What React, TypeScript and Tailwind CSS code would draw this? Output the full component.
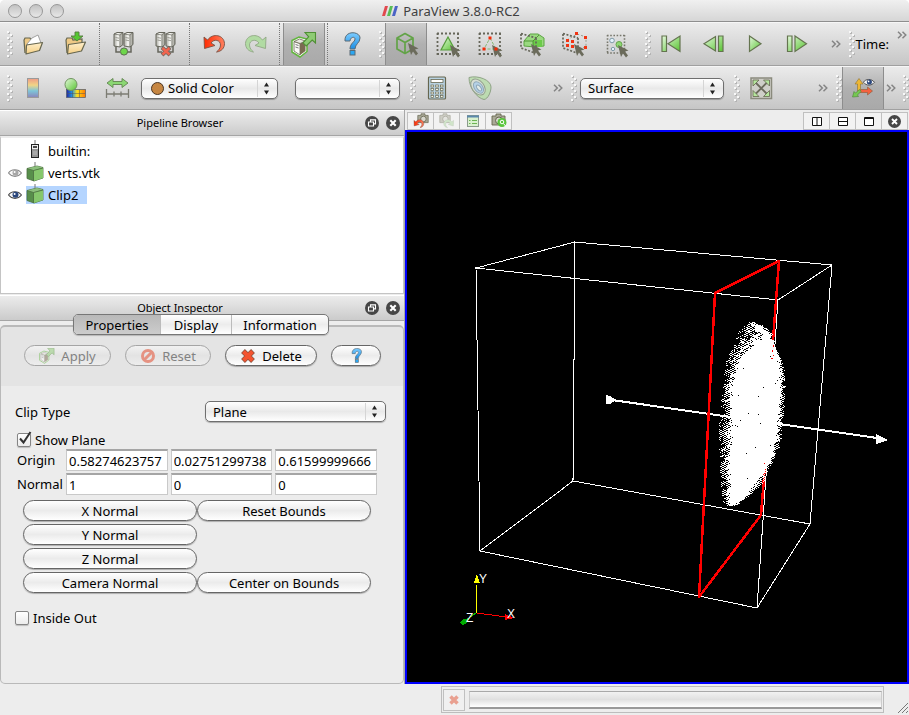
import React from "react";

/* ---------- shared pieces ---------- */

function Grip() {
  const dots = [0, 1, 2, 3, 4, 5, 6, 7, 8];
  return (
    <svg className="h-7 w-[6px] shrink-0" viewBox="0 0 6 28" aria-hidden="true">
      {dots.map((i) => (
        <g key={i}>
          <rect x={i % 2 ? 4 : 1} y={i * 3 + 2} width="2" height="2" fill="#b4b4b4" />
          <rect x={i % 2 ? 3 : 0} y={i * 3 + 1} width="2" height="2" fill="#f8f8f8" />
        </g>
      ))}
    </svg>
  );
}

function Separator() {
  return (
    <div className="flex w-[6px] shrink-0 self-stretch pl-[2px]">
      <div className="border-l border-dotted border-[#777]" />
    </div>
  );
}

function More() {
  return (
    <svg className="h-[8px] w-[10px] shrink-0" viewBox="0 0 10 8" fill="none" stroke="#858585" strokeWidth="1.5">
      <path d="M1 .7 4.3 4 1 7.3M5.5.7 8.8 4 5.5 7.3" />
    </svg>
  );
}

function ToolButton({ label, pressed, children }: { label: string; pressed?: boolean; children: React.ReactNode }) {
  const look = pressed
    ? "border-x border-[#8d8d8d] bg-linear-to-b from-[#cfcfcf] via-[#b0b0b0] to-[#a9a9a9]"
    : "";
  return (
    <button aria-label={label} className={"flex w-[42px] shrink-0 items-center justify-center self-stretch " + look}>
      <svg className="size-6 overflow-visible" viewBox="0 0 24 24" fill="none">
        {children}
      </svg>
    </button>
  );
}

function Select({ label, id, className, dot, value }: { label: string; id: string; className: string; dot?: boolean; value: string }) {
  return (
    <div className={"relative h-[21px] shrink-0 " + className}>
      <select
        id={id}
        aria-label={label}
        className={
          "block h-full w-full appearance-none rounded-[5px] border border-[#6f6f6f] bg-linear-to-b from-white via-[#e9e9e9] to-white text-[13px] leading-[18px] text-black shadow-[0_1px_1px_#0004] " +
          (dot ? "pl-[26px]" : "pl-[7px]")
        }
      >
        <option>{value}</option>
      </select>
      {dot && <span className="pointer-events-none absolute top-1 left-[10px] size-[13px] rounded-full border border-[#4a3523] bg-[#c68642]" />}
      <svg className="pointer-events-none absolute top-px right-px h-[19px] w-[20px]" viewBox="0 0 20 19">
        <path d="M.5 1v17" stroke="#d5d5d5" />
        <path d="M7 7.5 9.5 3.5 12 7.5zM7 11.5 9.5 15.5 12 11.5z" fill="#222" />
      </svg>
    </div>
  );
}

function Pill({ children, disabled, className = "", label }: { children?: React.ReactNode; disabled?: boolean; className?: string; label?: string }) {
  return (
    <button
      aria-label={label}
      disabled={disabled}
      className={
        "flex h-[21px] items-center justify-center rounded-full border text-[13px] leading-[18px] " +
        (disabled
          ? "border-[#a5a5a5] bg-linear-to-b from-[#f1f1f1] via-[#e3e3e3] to-[#ededed] text-[#828282] "
          : "border-[#666] bg-linear-to-b from-white via-[#ebebeb] to-white text-black shadow-[0_1px_1px_#0004] ") +
        className
      }
    >
      {children}
    </button>
  );
}

function RoundGlyph({ kind }: { kind: "float" | "close" }) {
  return (
    <svg className="size-[14px]" viewBox="0 0 14 14" fill="none">
      <circle cx="7" cy="7" r="7" fill="#464646" />
      {kind === "close" ? (
        <path d="M4.3 4.3 9.7 9.7M9.7 4.3 4.3 9.7" stroke="#fff" strokeWidth="2.1" />
      ) : (
        <path d="M5.5 6V3.9h5v4H8.7M3.5 6h5v4h-5z" stroke="#fff" strokeWidth="1.1" />
      )}
    </svg>
  );
}

function DockHeader({ title }: { title: string }) {
  return (
    <div className="flex h-[26px] shrink-0 items-center border-t border-b border-t-white border-b-[#a5a5a5] bg-linear-to-b from-[#ececec] to-[#cbcbcb] pr-1">
      <h2 className="flex-1 pr-[5px] text-center text-[11px] leading-4">{title}</h2>
      <div className="flex gap-[7px]">
        <button aria-label={"Float " + title}><RoundGlyph kind="float" /></button>
        <button aria-label={"Close " + title}><RoundGlyph kind="close" /></button>
      </div>
    </div>
  );
}

function Checkbox({ id, label, checked }: { id: string; label: string; checked?: boolean }) {
  return (
    <div className="flex h-[18px] items-center gap-1">
      <span className="relative flex">
        <input
          id={id}
          type="checkbox"
          defaultChecked={checked}
          className="size-[14px] appearance-none rounded-[2px] border border-[#858585] bg-linear-to-b from-white to-[#ececec] shadow-[0_1px_1px_#0003]"
        />
        {checked && (
          <svg className="pointer-events-none absolute -top-[2px] left-0 h-4 w-4" viewBox="0 0 16 16" fill="none">
            <path d="M3 7.5l3.500 4L13.5 1" stroke="#333" strokeWidth="2" />
          </svg>
        )}
      </span>
      <label htmlFor={id} className="text-[13px] leading-[18px]">{label}</label>
    </div>
  );
}

/* ---------- icon drawings (24 x 24) ---------- */

const ink = "#66664f";

function Gradients() {
  return (
    <svg className="absolute size-0" aria-hidden="true">
      <defs>
        <linearGradient id="green" x1="0" y1="0" x2="1" y2="1">
          <stop offset="0" stopColor="#e4f8dc" />
          <stop offset="1" stopColor="#58c431" />
        </linearGradient>
        <linearGradient id="folder" x1="0" y1="0" x2="0" y2="1">
          <stop offset="0" stopColor="#fff0cd" />
          <stop offset="1" stopColor="#f5cf84" />
        </linearGradient>
        <linearGradient id="steel" x1="0" y1="0" x2="1" y2="0">
          <stop offset="0" stopColor="#a5a59d" />
          <stop offset=".45" stopColor="#fbfbf8" />
          <stop offset="1" stopColor="#96968c" />
        </linearGradient>
        <linearGradient id="blue" x1="0" y1="0" x2="0" y2="1">
          <stop offset="0" stopColor="#7cccff" />
          <stop offset="1" stopColor="#1c8fe5" />
        </linearGradient>
        <linearGradient id="red" x1="0" y1="0" x2="1" y2="0">
          <stop offset="0" stopColor="#ff2a00" />
          <stop offset="1" stopColor="#ff8060" />
        </linearGradient>
        <linearGradient id="spectrum" x1="0" y1="0" x2="0" y2="1">
          <stop offset="0" stopColor="#ef9a86" />
          <stop offset=".35" stopColor="#f1d586" />
          <stop offset=".65" stopColor="#7ec5d8" />
          <stop offset="1" stopColor="#8b85bb" />
        </linearGradient>
        <linearGradient id="rainbow" x1="0" y1="0" x2="1" y2="0">
          <stop offset="0" stopColor="#24249c" />
          <stop offset=".3" stopColor="#2196e8" />
          <stop offset=".55" stopColor="#ffe11a" />
          <stop offset="1" stopColor="#ff7a00" />
        </linearGradient>
      </defs>
    </svg>
  );
}

const Folder = () => (
  <>
    <path d="M3 21 2 8l1-2h5l1 2 9-1v4" fill="#eec985" stroke={ink} strokeWidth="1.2" />
    <path d="M4.5 12.5 21.5 10 17.5 19 3.5 22z" fill="url(#folder)" stroke={ink} strokeWidth="1.2" strokeLinejoin="round" />
  </>
);

const OpenIcon = () => (
  <>
    <path d="M3 21 2 8l1-2h5l1 2" fill="#eec985" stroke={ink} strokeWidth="1.2" />
    <path d="M5 12 10 6 16 3 19 11 6 15z" fill="#fff" stroke="#999" strokeWidth=".9" />
    <path d="M4.5 13 20.5 10.5 17.5 18.5 4 22z" fill="url(#folder)" stroke={ink} strokeWidth="1.2" strokeLinejoin="round" />
  </>
);

const LoadStateIcon = () => (
  <>
    <Folder />
    <path d="M11 0h4v4h4l-6 5-6-5h4z" fill="#56c832" stroke="#55793f" strokeWidth=".9" />
  </>
);

const Servers = () => (
  <>
    <path d="M4 14v6h4M19 14v6h-4" stroke="#66665c" strokeWidth="1.5" />
    {[2, 12].map((x) => (
      <g key={x}>
        <path d={`M${x} 2 ${x + 3} .5h6v12l-3 2.500-6-1z`} fill="url(#steel)" stroke="#66665c" strokeWidth="1" />
        <path d={`M${x} 2l6 1v12M${x + 6} 3l3-2.500`} stroke="#66665c" strokeWidth=".7" />
        <path d={`M${x + 1.500} 5.500l3.500.7M${x + 1.500} 8l3.500.7`} stroke="#8a8a80" strokeWidth=".8" />
      </g>
    ))}
  </>
);

const ConnectIcon = () => (
  <>
    <Servers />
    <circle cx="12" cy="19.500" r="3.600" fill="#6dd64b" stroke="#5c6b50" />
  </>
);

const DisconnectIcon = () => (
  <>
    <Servers />
    <path d="M8 15.500l8 7.500M16 15.500 8 23" stroke="#76655c" strokeWidth="4" />
    <path d="M8.500 16l7 6.500M15.500 16l-7 6.500" stroke="#f2654f" strokeWidth="2.400" />
  </>
);

const UndoIcon = () => (
  <path d="M2 5 2.500 16.500 13 13.500 9 11C12 6.500 18.500 8 18.500 13c0 3-2 5.500-4 7C19.500 19.500 22.500 16 22.500 11.500 22 3 11 .5 5.500 8z" fill="url(#red)" stroke="#7c5143" strokeWidth=".9" />
);

const RedoIcon = () => (
  <path d="M22 5 21.500 16.500 11 13.500 15 11C12 6.500 5.500 8 5.500 13c0 3 2 5.500 4 7C4.500 19.500 1.500 16 1.500 11.500 2 3 13 .5 18.500 8z" fill="#b1dba3" stroke="#91a785" strokeWidth=".9" />
);

const ServerArrow = () => (
  <>
    <path d="M0 8.500 7 5l8 2v12.500L8 25l-8-5z" fill="#fff" stroke="#62b53e" strokeWidth="1.500" />
    <path d="M2 9.500 8 11.500V23l-6-4z" fill="#fbfbf8" stroke={ink} strokeWidth=".8" />
    <path d="M8 11.500 13.500 9v10L8 23z" fill="#7b6b52" />
    <path d="M2 9.500 7.500 7l6 2L8 11.500z" fill="#e9e9e2" stroke={ink} strokeWidth=".8" />
    <path d="M3.500 12.500l3 1M3.500 15l3 1" stroke="#777" strokeWidth="1" />
    <path d="M13 .5h10.500V11l-3.300-3-6 6-3.200-3.200 5.700-6z" fill="#8ecb74" stroke="#4f8f35" strokeWidth="1.100" />
  </>
);

const HelpIcon = () => (
  <>
    <path d="M5 9C4-2 20-1 20 6c0 5-5 6-5 11h-5c0-6 5-7 5-10 0-2.500-4.500-2.500-5 2z" fill="url(#blue)" stroke="#5a6b76" strokeWidth="1" />
    <rect x="10" y="18.500" width="5" height="4.500" fill="#2ba7f2" stroke="#5a6b76" strokeWidth="1" />
  </>
);

const Cursor = ({ x = 13, y = 11 }: { x?: number; y?: number }) => (
  <path transform={`translate(${x} ${y})`} d="M0 0 10.500 5.500 7 6.500 10 10.500 8 12.500 5 8.500 3 12z" fill="#6b6b5b" />
);

const CubeSelect = () => (
  <>
    <path d="M3 6 11 1.500 19 6v11l-8 4.500L3 17zM3 6l8 4.500L19 6M11 10.500v11" stroke="#62a347" strokeWidth="1.700" strokeLinejoin="round" />
    <Cursor x={14} y={11} />
  </>
);

const DashBox = () => <path d="M1 1.500h22M1 22h22M1.500 1v22M22 1v22" stroke="#66665a" strokeWidth="1.800" strokeDasharray="2 2" />;

const SurfaceCells = () => (
  <>
    <DashBox />
    <path d="M12 5 19 18H5z" fill="url(#green)" stroke="#569b3c" strokeWidth="1.200" />
    <Cursor x={14} y={13} />
  </>
);

const SurfacePoints = () => (
  <>
    <DashBox />
    <path d="M12 6 18 17H6z" stroke="#86b873" strokeDasharray="3 1.500" />
    <Cursor x={14} y={13} />
    <path d="M10.500 4.500h3v3h-3zM4.500 15.500h3v3h-3zM16.500 15.500h3v3h-3z" fill="#f32a08" />
  </>
);

const FrustumBase = () => (
  <path d="M1 1.500 16 6M1 2v14l14 5M16 6v12" stroke="#66665a" strokeWidth="1.700" strokeDasharray="2 1.600" />
);

const FrustumCells = () => (
  <>
    <path d="M4 9 10 2h8l6 4v8l-9 1-11-1z" fill="#9ad980" stroke="#5da543" />
    <path d="M13 8h9v7h-9z" fill="#6ccb4a" />
    <path d="M4 9h9v6M13 9l6-6" stroke="#4b9030" strokeWidth=".9" />
    <FrustumBase />
    <Cursor x={11} y={12} />
  </>
);

const FrustumPoints = () => (
  <>
    <FrustumBase />
    <path d="M5 8 15 2l9 3v10l-9 2" stroke="#999c8d" strokeDasharray="2 2" />
    <path d="M4 7h3v3H4zM4 12h3v3H4zM9 8h3v3H9zM9 13h3v3H9zM13 0h3v3h-3zM22 4h3v3h-3zM22 14h3v3h-3z" fill="#f13412" />
    <Cursor x={12} y={12} />
  </>
);

const BlockSelect = () => (
  <>
    <path d="M3 3.500h18M3 21h18M3.500 3v18M20.500 3v18" stroke="#77776c" strokeWidth="1.600" strokeDasharray="1.600 1.600" />
    <circle cx="8" cy="8.500" r="2.300" fill="#e3f2fa" stroke="#7f9aa8" />
    <circle cx="9" cy="17" r="1.700" fill="#e3f2fa" stroke="#7f9aa8" />
    <circle cx="15" cy="12.500" r="3" fill="#8ed873" stroke="#65a34d" />
    <Cursor x={14} y={13} />
  </>
);

const playInk = { fill: "url(#green)", stroke: "#64744f", strokeWidth: 1.2 };
const FirstIcon = () => <path d="M2 4h4.500v15.500H2zM20 4v15.500L8 11.800z" {...playInk} />;
const PrevIcon = () => <path d="M16.500 4H21v15.500h-4.500zM13.500 4.500v14.500L2 11.800z" {...playInk} />;
const PlayIcon = () => <path d="M5.500 4 17 11.800 5.500 19.500z" {...playInk} />;
const NextIcon = () => <path d="M1.500 4H6v15.500H1.500zM9 4 20.500 11.800 9 19.500z" {...playInk} />;

const LegendIcon = () => <rect x="5.500" y="2.500" width="11" height="19" fill="url(#spectrum)" stroke="#9a9a9a" />;

const EditColorIcon = () => (
  <>
    <rect x="2.500" y="13.500" width="19" height="8" fill="url(#rainbow)" stroke="#4d5a6a" strokeWidth=".7" />
    <path d="M8.500 13.500v8M15.500 13.500v8M3 17.500h18" stroke="#555" strokeWidth=".5" />
    <circle cx="7" cy="8.500" r="6" fill="url(#green)" stroke="#719461" />
  </>
);

const RescaleIcon = () => (
  <>
    <path d="M1 7 7 2.500v3h9v-3L22 7l-6 4.500v-3H7v3z" fill="#8bd773" stroke="#61844f" strokeWidth=".9" />
    <path d="M.5 13v9M22.500 13v9M0 18h23M8 15.500v5M15 15.500v5" stroke="#7c7c73" strokeWidth="1.300" />
  </>
);

const CalculatorIcon = () => (
  <>
    <rect x="3.500" y="1" width="17" height="22" rx="1" fill="#b8d2e2" stroke={ink} strokeWidth="1.200" />
    <rect x="6" y="3.500" width="12" height="3" fill="#fff" stroke={ink} strokeWidth=".8" />
    {[9, 12.5, 16, 19.5].map((y) =>
      [6, 10.7, 15.400].map((x) => <rect key={x + "-" + y} x={x} y={y} width="2.600" height="2" fill="#f7f7e8" stroke={ink} strokeWidth=".7" />)
    )}
  </>
);

const ContourIcon = () => (
  <g opacity=".8">
    <path d="M2 1.500C11-1 24 4 24 11c0 5-3 12-7 12.500C10 22 2 12 2 1.500z" fill="#b7dda9" stroke="#7d9672" />
    <ellipse cx="11" cy="11" rx="6" ry="9" transform="rotate(-38 11 11)" fill="#d6e0d3" stroke="#81917a" />
    <ellipse cx="11.500" cy="11.500" rx="4" ry="6.500" transform="rotate(-38 11.500 11.500)" fill="#acd0ea" stroke="#7f9db1" />
    <ellipse cx="12" cy="12" rx="1.800" ry="3.500" transform="rotate(-38 12 12)" fill="#e4f0ee" stroke="#7f9db1" />
  </g>
);

const ResetCameraIcon = () => (
  <>
    <rect x="2" y="2" width="20.500" height="20.500" fill="#cfcfc8" stroke="#8a8a7d" strokeWidth="1.500" />
    <path d="M6 6l12.500 12.500M18.500 6 6 18.500" stroke="#6b6b5b" strokeWidth="1.800" />
    <path d="M4 4h6L4 10zM20.500 4v6l-6-6zM4 20.500v-6l6 6zM20.500 20.500h-6l6-6z" fill="#b4e69c" stroke={ink} strokeWidth=".8" />
  </>
);

const Eye = ({ faded }: { faded?: boolean }) => (
  <g opacity={faded ? 0.65 : 1}>
    <path d="M.5 5C3 .8 10 .5 13.500 5 10 9.500 4 9.500.5 5z" fill="#f6f6f6" stroke="#4a4a4a" strokeWidth="1.100" />
    <circle cx="7.500" cy="4.700" r="3" fill={faded ? "#777" : "#2a467c"} />
    <circle cx="6.600" cy="4" r="1" fill="#fff" />
  </g>
);

const AxesIcon = () => (
  <>
    <path d="M8 13.500h8.500V11l5 4-5 4v-2.500H8z" fill="#f4613f" stroke="#8c5a38" strokeWidth=".6" />
    <path d="M6.500 15V8H4l4-5.500L12 8H9.500v7z" fill="#edb735" stroke="#8d7132" strokeWidth=".6" />
    <path d="M8.500 13.500 4.500 17 3 15.500 1.500 21 7.500 20.500 6.500 19 10 15.500z" fill="#75c951" stroke="#4d8238" strokeWidth=".6" />
    <g transform="translate(12 2) scale(.85)"><Eye /></g>
  </>
);

const CameraBody = () => (
  <>
    <path d="M1 3h4V1h5v2h4v9H1z" fill="#aaa997" stroke={ink} strokeWidth=".9" />
    <circle cx="8" cy="7.500" r="3.500" fill="#d7d7ce" stroke={ink} />
  </>
);

/* ---------- toolbars ---------- */

function TitleBar() {
  return (
    <header className="flex h-[22px] items-center rounded-t-[5px] border-b border-[#8e8e8e] bg-linear-to-b from-[#f0f0f0] to-[#d6d6d6] pl-2">
      <div className="flex w-[57px] gap-[7px]">
        {["Close", "Minimize", "Zoom"].map((n) => (
          <button key={n} aria-label={n} className="size-[14px] rounded-full border border-[#989898] bg-linear-to-b from-[#c2c2c2] to-[#e8e8e8]" />
        ))}
      </div>
      <div className="flex flex-1 items-center justify-center gap-[5px] pr-[72px]">
        <svg className="h-[10px] w-[16px]" viewBox="0 0 16 10">
          <path d="M3 0h3L3 10H0z" fill="#e1494e" />
          <path d="M8 0h3L8 10H5z" fill="#58bd55" />
          <path d="M13 0h3l-3 10h-3z" fill="#4b64c5" />
        </svg>
        <h1 className="text-[13px] leading-[18px] text-[#404040]">ParaView 3.8.0-RC2</h1>
      </div>
    </header>
  );
}

const bar = "flex h-11 items-center overflow-hidden border-t border-b border-t-[#f6f6f6] border-b-[#a0a0a0] bg-linear-to-b from-[#ebebeb] to-[#c6c6c6] pl-[7px]";

function MainToolbar() {
  return (
    <nav className={bar}>
      <Grip />
      <ToolButton label="Open"><OpenIcon /></ToolButton>
      <ToolButton label="Load state"><LoadStateIcon /></ToolButton>
      <Separator />
      <ToolButton label="Connect"><ConnectIcon /></ToolButton>
      <ToolButton label="Disconnect"><DisconnectIcon /></ToolButton>
      <Separator />
      <ToolButton label="Undo"><UndoIcon /></ToolButton>
      <ToolButton label="Redo"><RedoIcon /></ToolButton>
      <Separator />
      <ToolButton label="Auto apply" pressed><ServerArrow /></ToolButton>
      <Separator />
      <ToolButton label="Help"><HelpIcon /></ToolButton>
      <div className="ml-[6px] flex items-center self-stretch">
        <Grip />
        <ToolButton label="Interact" pressed><CubeSelect /></ToolButton>
        <ToolButton label="Select cells on"><SurfaceCells /></ToolButton>
        <ToolButton label="Select points on"><SurfacePoints /></ToolButton>
        <ToolButton label="Select cells through"><FrustumCells /></ToolButton>
        <ToolButton label="Select points through"><FrustumPoints /></ToolButton>
        <ToolButton label="Select block"><BlockSelect /></ToolButton>
      </div>
      <div className="ml-2 flex items-center self-stretch">
        <Grip />
        <ToolButton label="First frame"><FirstIcon /></ToolButton>
        <ToolButton label="Previous frame"><PrevIcon /></ToolButton>
        <ToolButton label="Play"><PlayIcon /></ToolButton>
        <ToolButton label="Next frame"><NextIcon /></ToolButton>
      </div>
      <div className="flex flex-1 items-center justify-end gap-2 self-stretch pr-[2px]">
        <More />
        <div className="flex items-center">
          <Grip />
          <span className="text-[13px] leading-[18px]">Time:</span>
        </div>
        <div className="self-start pt-2"><More /></div>
      </div>
    </nav>
  );
}

function DisplayToolbar() {
  return (
    <nav className={bar}>
      <Grip />
      <ToolButton label="Color legend"><LegendIcon /></ToolButton>
      <ToolButton label="Edit color map"><EditColorIcon /></ToolButton>
      <ToolButton label="Rescale"><RescaleIcon /></ToolButton>
      <Select id="color-by" label="Color by" value="Solid Color" dot className="ml-[2px] w-[137px]" />
      <Select id="component" label="Component" value="" className="ml-[17px] w-[105px]" />
      <div className="ml-[10px] flex items-center self-stretch">
        <Grip />
        <ToolButton label="Calculator"><CalculatorIcon /></ToolButton>
        <ToolButton label="Contour"><ContourIcon /></ToolButton>
      </div>
      <div className="flex flex-1 items-center justify-end gap-2 pr-[3px]">
        <More />
        <Grip />
      </div>
      <Select id="representation" label="Representation" value="Surface" className="w-[144px]" />
      <div className="ml-[10px] flex items-center self-stretch">
        <Grip />
        <ToolButton label="Reset camera"><ResetCameraIcon /></ToolButton>
      </div>
      <div className="ml-9 flex items-center gap-2 self-stretch">
        <More />
        <Grip />
      </div>
      <ToolButton label="Show orientation axes" pressed><AxesIcon /></ToolButton>
      <div className="ml-[2px] flex items-center gap-[7px]">
        <More />
        <Grip />
      </div>
    </nav>
  );
}

/* ---------- left column ---------- */

function GreenCube() {
  return (
    <svg className="h-[22px] w-[18px]" viewBox="0 0 18 22" fill="none">
      <path d="M9 0v5" stroke="#777" />
      <path d="M1 6.500 11 4l6 1.500V16L8 19 1 16.500z" fill="#588f4b" stroke="#4b6d40" strokeWidth=".8" />
      <path d="M7.500 8.500 17 6V16l-9 3z" fill="#86c76c" />
      <path d="M1 6.500 11 4l6 1.500L7.500 8.500z" fill="#8cbf7c" />
      <path d="M7.500 8.500 17 6M7.500 8.500V19M1 6.500 7.500 8.500" stroke="#4c7040" strokeWidth=".8" />
    </svg>
  );
}

function ServerGlyph() {
  return (
    <svg className="h-[22px] w-[18px]" viewBox="0 0 18 22" fill="none">
      <path d="M9 0v4" stroke="#777" />
      <rect x="5.500" y="4.500" width="7" height="13" fill="#949494" stroke="#222" />
      <path d="M6 5h6v4H6z" fill="#eee" />
      <path d="M7 7h4" stroke="#000" strokeWidth="1.400" />
      <path d="M7 12h4M7 14h4" stroke="#bbb" />
    </svg>
  );
}

function PipelineBrowser() {
  const rows = [
    { name: "builtin:", eye: "none", selected: false },
    { name: "verts.vtk", eye: "off", selected: false },
    { name: "Clip2", eye: "on", selected: true },
  ];
  return (
    <section className="flex flex-col">
      <DockHeader title="Pipeline Browser" />
      <ul className="h-[158px] border border-t-2 border-[#c4c4c4] border-t-[#ececec] bg-white py-[2px]">
        {rows.map((r) => (
          <li key={r.name} className="flex h-[22px] items-center pl-[7px]">
            <div className="flex w-[18px]">
              {r.eye !== "none" && (
                <button aria-label={"Toggle visibility of " + r.name}>
                  <svg className="h-[10px] w-[14px]" viewBox="0 0 14 10"><Eye faded={r.eye === "off"} /></svg>
                </button>
              )}
            </div>
            <div className={"flex h-[18px] items-center gap-1 pr-[9px] " + (r.selected ? "bg-[#b5d5ff]" : "")}>
              {r.eye === "none" ? <ServerGlyph /> : <GreenCube />}
              <span className="text-[13px] leading-[18px]">{r.name}</span>
            </div>
          </li>
        ))}
      </ul>
    </section>
  );
}

const field = "block h-[22px] w-full min-w-0 border border-t-2 border-[#c9c9c9] border-t-[#a5a5a5] bg-white px-[2px] text-[13px] leading-[18px]";

function ObjectInspector() {
  return (
    <section className="mt-px flex flex-1 flex-col">
      <DockHeader title="Object Inspector" />
      <div className="mt-1 flex flex-1 flex-col rounded-[5px] border border-t-2 border-[#b9b9b9] bg-[#e4e4e4]">
        <div className="-mt-[13px] flex justify-center pr-[2px]" role="tablist">
          <div className="flex h-[21px] overflow-hidden rounded-[5px] border border-[#777] bg-linear-to-b from-white via-[#ececec] to-white text-[13px] leading-[18px] shadow-[0_1px_1px_#0003]">
            <button role="tab" aria-selected="true" className="w-[86px] bg-linear-to-b from-[#b9b9b9] to-[#cccccc]">Properties</button>
            <button role="tab" aria-selected="false" className="w-[71px] border-l border-[#bbb]">Display</button>
            <button role="tab" aria-selected="false" className="w-[97px] border-l border-[#bbb]">Information</button>
          </div>
        </div>
        <div className="mt-[10px] flex gap-[14px] pl-[23px] pb-5">
          <Pill disabled className="w-[87px] gap-[6px]">
            <svg className="size-4 opacity-50" viewBox="0 0 24 26" fill="none"><ServerArrow /></svg>
            Apply
          </Pill>
          <Pill disabled className="w-[86px] gap-[6px]">
            <svg className="size-4" viewBox="0 0 16 16" fill="none">
              <circle cx="8" cy="8" r="5.500" stroke="#e59282" strokeWidth="3" />
              <path d="M4 12 12 4" stroke="#e59282" strokeWidth="3" />
            </svg>
            Reset
          </Pill>
          <Pill className="w-[92px] gap-[6px]">
            <svg className="size-4" viewBox="0 0 16 16" fill="none">
              <path d="M3 3l10 10M13 3 3 13" stroke="#86523f" strokeWidth="5.400" />
              <path d="M3.500 3.500l9 9M12.500 3.500l-9 9" stroke="#f4532f" strokeWidth="4" />
            </svg>
            Delete
          </Pill>
          <Pill className="w-[50px]" label="Help">
            <svg className="size-[15px]" viewBox="0 0 24 24" fill="none"><HelpIcon /></svg>
          </Pill>
        </div>
        <div className="flex flex-1 flex-col rounded-b-[5px] bg-[#ececec] px-[14px] pt-[15px]">
          <div className="flex items-center justify-between pr-[3px]">
            <label htmlFor="clip-type" className="text-[13px] leading-[18px]">Clip Type</label>
            <Select id="clip-type" label="Clip Type" value="Plane" className="w-[181px]" />
          </div>
          <div className="mt-[9px] pl-[2px]">
            <Checkbox id="show-plane" label="Show Plane" checked />
          </div>
          <div className="grid grid-cols-[46px_1fr_1fr_1fr] items-center gap-x-[3px] gap-y-[2px] pr-3 pl-[2px] text-[13px] leading-[18px]">
            <span>Origin</span>
            <input aria-label="Origin X" className={field} defaultValue="0.58274623757" />
            <input aria-label="Origin Y" className={field} defaultValue="0.02751299738" />
            <input aria-label="Origin Z" className={field} defaultValue="0.61599999666" />
            <span>Normal</span>
            <input aria-label="Normal X" className={field} defaultValue="1" />
            <input aria-label="Normal Y" className={field} defaultValue="0" />
            <input aria-label="Normal Z" className={field} defaultValue="0" />
          </div>
          <div className="mt-[5px] grid grid-cols-2 gap-y-[3px] pr-[18px] pl-2">
            <Pill>X Normal</Pill>
            <Pill>Reset Bounds</Pill>
            <Pill className="col-start-1">Y Normal</Pill>
            <Pill className="col-start-1">Z Normal</Pill>
            <Pill className="col-start-1">Camera Normal</Pill>
            <Pill>Center on Bounds</Pill>
          </div>
          <div className="mt-4">
            <Checkbox id="inside-out" label="Inside Out" />
          </div>
        </div>
      </div>
    </section>
  );
}

/* ---------- 3D view ---------- */

/* y, outer left, outer right, dense left, dense right (thirds of a pixel) */
const profile = [
  [32, 152, 158, 155, 155],
  [50, 125, 200, 180, 182],
  [65, 115, 215, 190, 194],
  [90, 103, 222, 186, 214],
  [110, 98, 226, 160, 224],
  [140, 80, 242, 126, 232],
  [170, 75, 250, 110, 236],
  [210, 68, 258, 102, 238],
  [250, 65, 254, 98, 238],
  [300, 60, 252, 96, 232],
  [350, 55, 250, 98, 230],
  [400, 50, 242, 96, 220],
  [430, 60, 232, 88, 212],
  [460, 58, 214, 88, 205],
  [490, 60, 200, 90, 188],
  [520, 60, 188, 92, 162],
  [550, 65, 160, 88, 140],
  [580, 70, 122, 88, 104],
  [590, 76, 90, 82, 82],
];

function noise(a: number, b: number) {
  const v = Math.sin(a * 127.1 + b * 311.7) * 43758.5453;
  return v - Math.floor(v);
}

function cloudPath() {
  let d = "";
  for (let y = 11; y < 196; y++) {
    const t = y * 3;
    const i = profile.findIndex((p) => p[0] > t);
    if (i < 1) continue;
    const a = profile[i - 1];
    const b = profile[i];
    const f = (t - a[0]) / (b[0] - a[0]);
    const [ol, or, cl, cr] = [1, 2, 3, 4].map((k) => (a[k] + (b[k] - a[k]) * f) / 3);
    let start = -1;
    for (let x = Math.floor(ol) - 1; x <= or + 2; x++) {
      let on = false;
      if (x >= ol && x <= or) {
        if (x >= cl && x <= cr) {
          on = noise(x, y) > 0.005;
        } else {
          const depth = x < cl ? (x - ol) / Math.max(1, cl - ol) : (or - x) / Math.max(1, or - cr);
          const band = (x + 2 * y) % 4 < 2 ? 0 : 0.3;
          const patch = noise(Math.floor((x + 2 * y) / 5), Math.floor(x / 5));
          on = patch * 0.35 + noise(x, y) * 0.35 + band < 0.24 + depth * 0.55;
        }
      }
      if (on && start < 0) start = x;
      if (!on && start >= 0) {
        d += `M${700 + start} ${310 + y}h${x - start}v1h${start - x}z`;
        start = -1;
      }
    }
  }
  return d;
}

const cloud = cloudPath();

function Scene() {
  return (
    <svg className="block h-full w-full" viewBox="407 132 500 550" fill="none" shapeRendering="crispEdges" role="img" aria-label="Clipped point cloud">
      <g stroke="#fff">
        <path d="M476 268 778 300 757 608 480 551zM575 242 832 265 810 524 573 481zM476 268 575 242M778 300 832 265M757 608 810 524M480 551 573 481" />
        <path d="M612 400 884 439" strokeWidth="2" />
      </g>
      <path d="M606 395v9l4 0 6-4-6-4zM876 434v10l12-4z" fill="#fff" />
      <path d="M773 340 779 261 715 293 699 597 761 515 765 465" stroke="#f00" strokeWidth="2.500" strokeLinejoin="round" />
      <path d={cloud} fill="#fff" />
      <path d="M773 345h1v2h-1zM772 350h1v2h-1zM773 355h1v1h-1zM771 358h2v1h-2zM764 463h1v1h-1z" fill="#f00" />
      <path d="M476.500 613V585" stroke="#ff0" />
      <path d="M477 574 474 583h6z" fill="#ff0" />
      <path d="M477 613 506 617" stroke="#f00" />
      <path d="M505 614v6l9-2z" fill="#f00" />
      <path d="M476 613 466 620" stroke="#0c0" />
      <path d="M460 623l3-4 4 0 0 4-4 2z" fill="#0a0" />
      <g fill="#fff" fontFamily="Liberation Sans, sans-serif" fontSize="12">
        <text x="479" y="583">Y</text>
        <text x="507" y="618">X</text>
        <text x="466" y="622">Z</text>
      </g>
    </svg>
  );
}

const viewButton = "flex h-[18px] w-[27px] items-center justify-center border border-[#c0c0c0] bg-[#f2f2f2]";

function RenderView() {
  return (
    <section className="flex min-w-0 flex-1 flex-col">
      <div className="flex h-5 items-end justify-between bg-[#ededed] pr-px pl-[2px]">
        <div className="flex -space-x-px">
          <button aria-label="Undo camera" className={viewButton}>
            <svg className="size-4" viewBox="0 0 16 16" fill="none">
              <g transform="translate(4 0) scale(.8)"><CameraBody /></g>
              <g transform="translate(0 5) scale(.48)"><UndoIcon /></g>
            </svg>
          </button>
          <button aria-label="Redo camera" className={viewButton}>
            <svg className="size-4 opacity-50" viewBox="0 0 16 16" fill="none">
              <g transform="scale(.8)"><CameraBody /></g>
              <g transform="translate(4 5) scale(.48)"><RedoIcon /></g>
            </svg>
          </button>
          <button aria-label="View settings" className={viewButton}>
            <svg className="size-4" viewBox="0 0 16 16" fill="none">
              <rect x="2.500" y="2.500" width="11" height="11" fill="#d9f1cf" stroke="#8b9b8d" />
              <path d="M2 3.500h12" stroke="#5c88ad" strokeWidth="2" />
              <path d="M4 7.500h1.500M7 7.500h5M4 10.500h1.500M7 10.500h5" stroke="#6cb453" />
            </svg>
          </button>
          <button aria-label="Capture view" className={viewButton}>
            <svg className="size-4" viewBox="0 0 16 16" fill="none">
              <CameraBody />
              <circle cx="11" cy="9.500" r="4.500" fill="#58c53a" />
              <circle cx="11" cy="9" r="1.800" stroke="#fff" />
              <path d="M12.500 10.500l2 2.500" stroke="#fff" />
            </svg>
          </button>
        </div>
        <div className="flex -space-x-px">
          <button aria-label="Split horizontal" className={viewButton}>
            <svg className="h-[9px] w-[10px]" viewBox="0 0 10 9" fill="#fff" stroke="#111"><path d="M.5.5h9v8h-9zM5 0v9" /></svg>
          </button>
          <button aria-label="Split vertical" className={viewButton}>
            <svg className="h-[9px] w-[10px]" viewBox="0 0 10 9" fill="#fff" stroke="#111"><path d="M.5.5h9v8h-9zM0 4.500h9" /></svg>
          </button>
          <button aria-label="Maximize" className={viewButton}>
            <svg className="h-[9px] w-[10px]" viewBox="0 0 10 9" fill="#fff" stroke="#111"><path d="M.5.5h9v8h-9zM0 1.500h9" /></svg>
          </button>
          <button aria-label="Close view" className={viewButton}>
            <svg className="size-[13px]" viewBox="0 0 14 14"><circle cx="7" cy="7" r="7" fill="#464646" /><path d="M4.300 4.300 9.700 9.700M9.700 4.300 4.300 9.700" stroke="#fff" strokeWidth="2" /></svg>
          </button>
        </div>
      </div>
      <div className="min-h-0 flex-1 border-2 border-[#0000fe] bg-black">
        <Scene />
      </div>
    </section>
  );
}

function StatusBar() {
  return (
    <footer className="flex h-[31px] items-start pt-[2px] pl-[441px]">
      <div className="flex h-[27px] flex-1 items-center gap-1 border border-[#bdbdbd] px-px">
        <button aria-label="Abort" className="flex size-[22px] items-center justify-center border border-[#c0c0c0] bg-[#f0f0f0]">
          <svg className="size-[10px]" viewBox="0 0 10 10"><path d="M1.500 1.500l7 7M8.500 1.500l-7 7" stroke="#e9a090" strokeWidth="3.500" /></svg>
        </button>
        <div className="h-[18px] flex-1 border border-t-[#a9a9a9] border-r-[#ccc] border-b-2 border-b-[#999] border-l-[#ccc] bg-linear-to-b from-[#f2f2f2] via-[#e0e0e0] to-white" />
      </div>
      <svg className="mt-4 ml-[13px] h-3 w-[12px]" viewBox="0 0 12 12" stroke="#777"><path d="M1 11 11 1M5 11l6-6M9 11l2-2" /></svg>
    </footer>
  );
}

export default function App() {
  return (
    <div className="flex min-h-screen flex-col rounded-t-[5px] bg-[#ededed] font-['Lucida_Grande','Noto_Sans',sans-serif] text-black">
      <Gradients />
      <TitleBar />
      <MainToolbar />
      <DisplayToolbar />
      <main className="flex flex-1">
        <aside className="flex w-[405px] shrink-0 flex-col border-r border-[#a8a8a8]">
          <PipelineBrowser />
          <ObjectInspector />
        </aside>
        <RenderView />
      </main>
      <StatusBar />
    </div>
  );
}
